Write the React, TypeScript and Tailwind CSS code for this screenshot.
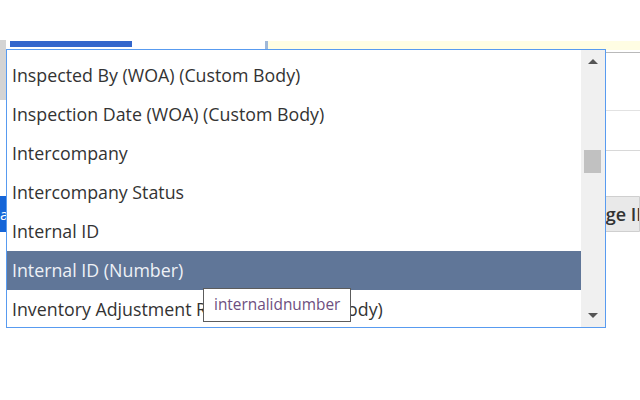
import React from 'react';

const options = [
  'Inspected By (WOA) (Custom Body)',
  'Inspection Date (WOA) (Custom Body)',
  'Intercompany',
  'Intercompany Status',
  'Internal ID',
  'Internal ID (Number)',
  'Inventory Adjustment Reason (Custom Body)',
];

const selected = 5;

function Background() {
  return (
    <div className="flex flex-col">
      <div className="h-[40px]" />
      {/* strip under the top fields */}
      <div className="flex h-[10px] items-start">
        <div className="h-[60px] w-[6px] bg-[#d4d4d4]" />
        <div className="ml-[4px] mt-[1px] h-[6px] w-[122px] bg-[#3366cc]" />
        <div className="ml-[133px] mt-[1px] h-[9px] w-[3px] bg-[#9fb8d8]" />
        <div className="mt-[1px] h-[9px] flex-1 bg-[#fffde3]" />
      </div>
      <div className="flex h-[60px] justify-end">
        <div className="mt-[2px] h-0 w-[35px] border-t border-[#b9b9b9]" />
      </div>
      <div className="flex h-[40px] justify-end">
        <div className="w-[35px] border-t border-[#e2e2e2]" />
      </div>
      <div className="flex h-[46px] justify-end">
        <div className="w-[35px] border-t border-[#d8d8d8]" />
      </div>
      <div className="flex h-[36px] items-stretch justify-between">
        <div className="flex w-[8px] items-center overflow-hidden bg-[#1565d8] text-[15px] leading-none text-white">
          a
        </div>
        <div className="flex w-[100px] shrink-0 items-center overflow-hidden whitespace-nowrap rounded-l-[2px] border border-[#cfcfcf] bg-[#e9e9e9] pl-[20px] text-[18px] font-semibold text-[#333]">
          Change ID
        </div>
      </div>
    </div>
  );
}

function Dropdown() {
  return (
    <div className="absolute left-[6px] top-[49px] flex h-[279px] w-[600px] border border-[#589bf0] bg-white">
      <div className="flex-1 overflow-hidden pt-[6px]">
        {options.map((o, i) => (
          <div
            key={o}
            className={`flex h-[39px] items-center whitespace-nowrap pl-[5px] text-[17.8px] ${
              i === selected ? 'bg-[#607698] text-[#eef1f6]' : 'text-[#333333]'
            }`}
          >
            {o}
          </div>
        ))}
      </div>
      <div className="relative flex w-[24px] flex-col items-center justify-between bg-[#f0f0f0] py-[9px]">
        <div className="h-0 w-0 border-x-[5px] border-b-[5px] border-x-transparent border-b-[#555]" />
        <div className="absolute left-[3px] top-[100px] h-[23px] w-[17px] bg-[#c1c1c1]" />
        <div className="h-0 w-0 border-x-[5px] border-t-[5px] border-x-transparent border-t-[#555]" />
      </div>
      <div className="absolute left-[196px] top-[238px] flex h-[34px] items-center border border-[#5c5c5c] bg-white px-[10px] text-[15.4px] text-[#6e4f80]">
        internalidnumber
      </div>
    </div>
  );
}

export default function App() {
  return (
    <div
      className="relative h-[400px] w-[640px] overflow-hidden bg-white"
      style={{ fontFamily: '"Open Sans", "Liberation Sans", sans-serif' }}
    >
      <Background />
      <Dropdown />
    </div>
  );
}
